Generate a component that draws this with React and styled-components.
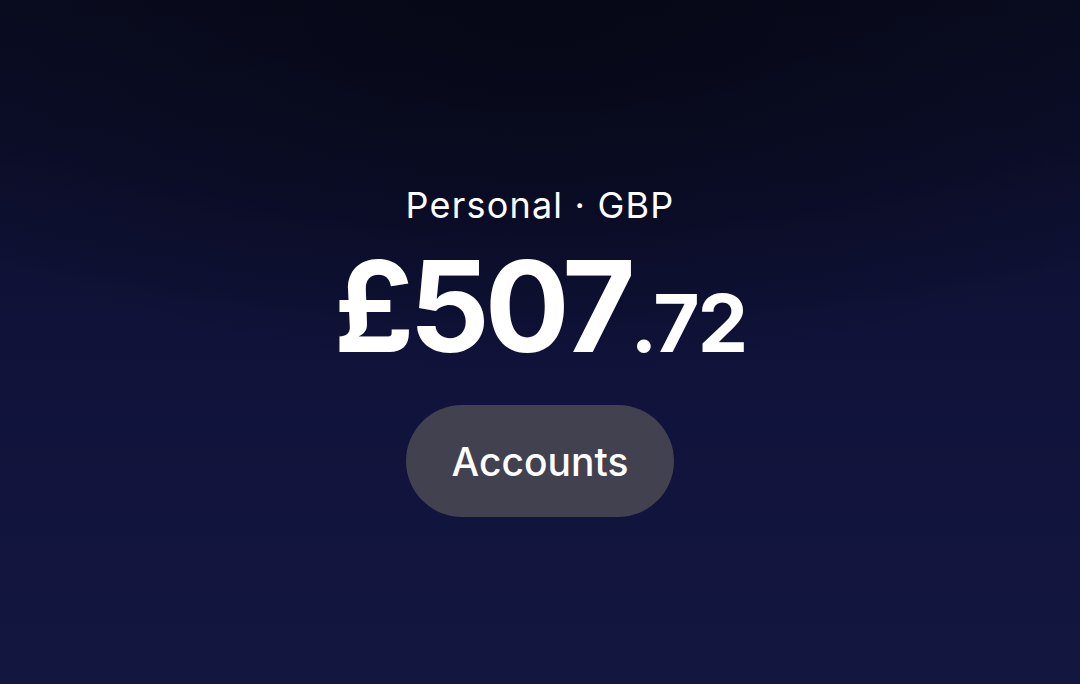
import React from 'react';
import styled, { createGlobalStyle } from 'styled-components';

const GlobalStyle = createGlobalStyle`
  html, body {
    margin: 0;
    padding: 0;
    height: 100%;
  }
  body {
    font-family: Inter, "Noto Sans", sans-serif;
    background: #0e1030;
    -webkit-font-smoothing: antialiased;
  }
`;

const Screen = styled.div`
  width: 100vw;
  height: 100vh;
  display: flex;
  flex-direction: column;
  align-items: center;
  padding-top: 187px;
  box-sizing: border-box;
  background:
    radial-gradient(ellipse 70% 55% at 50% 0%, rgba(5, 7, 20, 0.9) 0%, rgba(5, 7, 20, 0) 100%),
    linear-gradient(180deg, #0a0c22 0%, #10123a 50%, #13163f 100%);
  color: #fff;
`;

const Label = styled.div`
  font-size: 36px;
  font-weight: 400;
  letter-spacing: 1.2px;
  line-height: 1;
`;

const Amount = styled.div`
  display: flex;
  align-items: baseline;
  margin-top: 20px;
  line-height: 1;
  font-weight: 700;
`;

const Whole = styled.span`
  font-size: 126px;
  letter-spacing: -5px;
`;

const Fraction = styled.span`
  font-size: 80px;
  font-weight: 700;
  letter-spacing: -2px;
  margin-left: 0;
`;

const Pill = styled.button`
  margin-top: 36px;
  width: 268px;
  height: 112px;
  border: none;
  border-radius: 56px;
  background: #41414f;
  color: #fff;
  font-family: inherit;
  font-size: 39px;
  font-weight: 500;
  cursor: pointer;
`;

const App = () => {
  return (
    <>
      <GlobalStyle />
      <Screen>
        <Label>Personal · GBP</Label>
        <Amount>
          <Whole>£507</Whole>
          <Fraction>.72</Fraction>
        </Amount>
        <Pill>Accounts</Pill>
      </Screen>
    </>
  );
};

export default App;
